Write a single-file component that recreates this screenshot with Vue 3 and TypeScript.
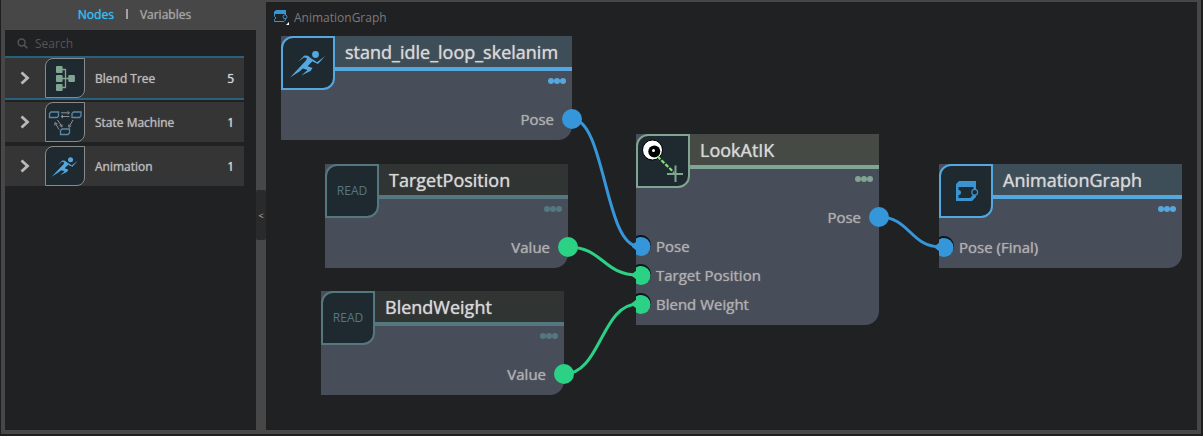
<script setup lang="ts">
import { computed, ref } from 'vue'

type Tone = 'clip' | 'read' | 'ik'
type Glyph = 'runner' | 'read' | 'look' | 'graph' | 'tree' | 'states'

interface Port {
  label: string
  kind: 'pose' | 'value'
}

interface GraphNode {
  id: string
  title: string
  tone: Tone
  glyph: Glyph
  x: number
  y: number
  width: number
  outputs: Port[]
  inputs: Port[]
}

interface Wire {
  from: [string, number]
  to: [string, number]
}

interface Category {
  name: string
  glyph: Glyph
  count: number
}

const tab = ref<'nodes' | 'variables'>('nodes')
const query = ref('')
const selected = ref('Blend Tree')

const categories: Category[] = [
  { name: 'Blend Tree', glyph: 'tree', count: 5 },
  { name: 'State Machine', glyph: 'states', count: 1 },
  { name: 'Animation', glyph: 'runner', count: 1 },
]

const visibleCategories = computed(() =>
  categories.filter((c) => c.name.toLowerCase().includes(query.value.toLowerCase())),
)

const nodes: GraphNode[] = [
  { id: 'clip', title: 'stand_idle_loop_skelanim', tone: 'clip', glyph: 'runner', x: 15, y: 34, width: 291, outputs: [{ label: 'Pose', kind: 'pose' }], inputs: [] },
  { id: 'target', title: 'TargetPosition', tone: 'read', glyph: 'read', x: 59, y: 162, width: 243, outputs: [{ label: 'Value', kind: 'value' }], inputs: [] },
  { id: 'weight', title: 'BlendWeight', tone: 'read', glyph: 'read', x: 55, y: 289, width: 243, outputs: [{ label: 'Value', kind: 'value' }], inputs: [] },
  {
    id: 'ik', title: 'LookAtIK', tone: 'ik', glyph: 'look', x: 370, y: 132, width: 243,
    outputs: [{ label: 'Pose', kind: 'pose' }],
    inputs: [
      { label: 'Pose', kind: 'pose' },
      { label: 'Target Position', kind: 'value' },
      { label: 'Blend Weight', kind: 'value' },
    ],
  },
  { id: 'final', title: 'AnimationGraph', tone: 'clip', glyph: 'graph', x: 673, y: 162, width: 243, outputs: [], inputs: [{ label: 'Pose (Final)', kind: 'pose' }] },
]

const wires: Wire[] = [
  { from: ['clip', 0], to: ['ik', 0] },
  { from: ['target', 0], to: ['ik', 1] },
  { from: ['weight', 0], to: ['ik', 2] },
  { from: ['ik', 0], to: ['final', 0] },
]

const FIRST_ROW = 83
const ROW = 29

const paths = computed(() =>
  wires.map((w) => {
    const a = nodes.find((n) => n.id === w.from[0])!
    const b = nodes.find((n) => n.id === w.to[0])!
    const x1 = a.x + a.width
    const y1 = a.y + FIRST_ROW + w.from[1] * ROW
    const x2 = b.x
    const y2 = b.y + FIRST_ROW + (b.outputs.length + w.to[1]) * ROW
    const mid = (x1 + x2 + 2) / 2
    return {
      d: `M${x1} ${y1} C${mid} ${y1} ${mid} ${y2} ${x2 + 2} ${y2}`,
      flare: `M${x2 - 4} ${y2 - 1} L${x2 + 1} ${y2 - 5} V${y2 + 5} L${x2 - 4} ${y2 + 1}Z`,
      kind: a.outputs[w.from[1]].kind,
    }
  }),
)
</script>

<template>
  <svg class="defs" aria-hidden="true">
    <symbol id="g-runner" viewBox="0 0 54 54">
      <g fill="#55a8df">
        <circle cx="34.5" cy="18.5" r="3.4" />
        <path d="M23.3 19.6L27 19.8L29 21.6L32.6 24L26.6 30.2L31.6 32L29.5 35L20.3 39.6L26.6 34L21.8 32.6L18.5 35.4L9 41.4L17 33L25 24.6L26 22L23 21.4L17.2 25.8Z" />
        <path d="M32 23.4L36 26.2L44.2 20L37 28L31.5 25.6Z" />
      </g>
    </symbol>
    <symbol id="g-look" viewBox="0 0 54 54">
      <circle cx="16.5" cy="16" r="10" fill="#fff" stroke="#000" />
      <circle cx="18.3" cy="17.5" r="6" fill="#000" />
      <circle cx="17.5" cy="16.5" r="1.5" fill="#fff" />
      <path d="M21.5 22.5L38 38.5" stroke="#89dc83" stroke-width="2.2" stroke-dasharray="4 1.5" />
      <path d="M39.5 31.5V48M31 40H47" stroke="#80a592" stroke-width="2" />
    </symbol>
    <symbol id="g-graph" viewBox="0 0 54 54">
      <path fill="#3994d1" fill-rule="evenodd" d="M20 17H37V33L33 37H17V20ZM19.5 23V26A2.5 2.5 0 0 1 19.5 31V34H31L34.5 30.5V23Z" />
      <circle cx="35.7" cy="28.3" r="2.9" fill="#1f2930" stroke="#3994d1" stroke-width="1.2" />
    </symbol>
    <symbol id="g-tree" viewBox="0 0 40 40">
      <path d="M14 11.5H20.5V29.5H14M14 20.5H26" fill="none" stroke="#80a592" stroke-width="1.3" />
      <g fill="#80a592">
        <rect x="11" y="8" width="6.6" height="7" rx="1" />
        <rect x="11" y="17" width="6.6" height="7" rx="1" />
        <rect x="11" y="26" width="6.6" height="7" rx="1" />
        <rect x="23.3" y="17" width="6.6" height="7" rx="1" />
      </g>
    </symbol>
    <symbol id="g-states" viewBox="0 0 40 40">
      <g fill="none" stroke="#5a89a9" stroke-width="1.3">
        <path d="M6 10H13.5V14L12 15.5H4.5V11.5Z" />
        <path d="M28.5 10H36V14L34.5 15.5H27V11.5Z" />
        <path d="M17 27H24.5V31L23 32.5H15.5V28.5Z" />
      </g>
      <g fill="none" stroke="#8b9297" stroke-width="1">
        <path d="M16 10.8H23.5M16.5 14.5H24.5M12.5 18L16.5 24M14 27.5L10.5 21.5M28 18L24.5 24" />
        <path d="M22.5 9.3L24.5 10.8L22.5 12.3M18 13L16 14.5L18 16M14.5 23.5L17 25V22.3M9.8 23.5L10 20.5L12.5 22M23.8 22.5V25.3L26.2 24" />
      </g>
    </symbol>
  </svg>

  <main class="editor">
    <aside class="sidebar">
      <nav class="tabs" aria-label="Panels">
        <button type="button" class="tab" :class="{ active: tab === 'nodes' }" @click="tab = 'nodes'">Nodes</button>
        <span class="divider"></span>
        <button type="button" class="tab" :class="{ active: tab === 'variables' }" @click="tab = 'variables'">Variables</button>
      </nav>
      <div class="palette">
        <label class="search">
          <svg viewBox="0 0 12 12" class="lens" aria-hidden="true">
            <circle cx="5" cy="5" r="3.8" fill="none" stroke="currentColor" stroke-width="1.6" />
            <path d="M7.8 7.8L11.2 11.2" stroke="currentColor" stroke-width="1.8" />
          </svg>
          <input v-model="query" type="text" placeholder="Search" aria-label="Search" />
        </label>
        <ul class="categories">
          <li v-for="c in visibleCategories" :key="c.name">
            <button type="button" class="category" :class="{ selected: selected === c.name }" @click="selected = c.name">
              <svg viewBox="0 0 10 14" class="chevron" aria-hidden="true">
                <path d="M1.5 1.5L7.5 7L1.5 12.5" fill="none" stroke="currentColor" stroke-width="2.8" />
              </svg>
              <span class="badge"><svg><use :href="'#g-' + c.glyph" /></svg></span>
              <span class="name">{{ c.name }}</span>
              <span class="count">{{ c.count }}</span>
            </button>
          </li>
        </ul>
      </div>
    </aside>

    <div class="splitter">
      <button type="button" class="collapse" aria-label="Collapse panel">&lt;</button>
    </div>

    <section class="canvas">
      <header class="crumbs">
        <svg viewBox="0 0 15 15" class="crumb-icon" aria-hidden="true">
          <path fill="#3994d1" d="M2 0H12V4H0V2Z" />
          <path fill="none" stroke="#3994d1" d="M0.5 3.5V6.5L2 8L0.5 9.5V11.5H10L11.5 10V3.5" />
          <circle cx="11" cy="6.8" r="2" fill="#202122" stroke="#3994d1" />
          <path fill="#fff" d="M15 12V15H12Z" />
        </svg>
        <span>AnimationGraph</span>
      </header>

      <svg class="wires" aria-hidden="true">
        <g v-for="(p, i) in paths" :key="i" :class="p.kind">
          <path class="wire" :d="p.d" />
          <path class="flare" :d="p.flare" />
        </g>
      </svg>

      <article
        v-for="n in nodes"
        :key="n.id"
        class="node"
        :class="n.tone"
        :style="{ left: n.x + 'px', top: n.y + 'px', width: n.width + 'px' }"
      >
        <div class="emblem">
          <span v-if="n.glyph === 'read'" class="read-text">READ</span>
          <svg v-else><use :href="'#g-' + n.glyph" /></svg>
        </div>
        <h2 class="title">{{ n.title }}</h2>
        <div class="tools">
          <button type="button" class="more" :aria-label="'Options for ' + n.title"><i></i><i></i><i></i></button>
        </div>
        <div v-for="o in n.outputs" :key="o.label" class="row out" :class="o.kind">
          <span>{{ o.label }}</span>
          <span class="dot"></span>
        </div>
        <div v-for="p in n.inputs" :key="p.label" class="row in" :class="p.kind">
          <svg class="socket" viewBox="0 0 15 21" aria-hidden="true">
            <circle cx="5" cy="10" r="10" fill="#0b131c" />
            <circle cx="5" cy="11.5" r="9.5" fill="currentColor" />
          </svg>
          <span>{{ p.label }}</span>
        </div>
      </article>
    </section>
  </main>
</template>

<style>
body {
  margin: 0;
  background: #1d1d22;
}
</style>

<style scoped>
.defs {
  position: absolute;
  width: 0;
  height: 0;
}

.editor {
  box-sizing: border-box;
  display: grid;
  grid-template-columns: 251px 10px 1fr;
  min-height: 100vh;
  padding: 0 4px 4px;
  border: solid #1d1d22;
  border-width: 0 2px 2px 1px;
  background: #474747;
  font-family: "Open Sans", "Noto Sans", sans-serif;
}

button {
  padding: 0;
  border: 0;
  background: none;
  color: inherit;
  font: inherit;
  cursor: pointer;
}

.tab,
.name,
.count,
.title,
.row {
  text-shadow: 0 0 1px currentColor;
}

.sidebar {
  display: flex;
  flex-direction: column;
}

.tabs {
  box-sizing: border-box;
  display: flex;
  align-items: center;
  justify-content: center;
  gap: 12px;
  height: 30px;
  padding: 0 0 2px 8px;
  color: #a2a2a2;
  font-size: 12px;
}

.tab.active {
  color: #35bdf4;
}

.divider {
  width: 2px;
  height: 10px;
  background: #a2a2a2;
}

.palette {
  flex: 1;
  background: #202122;
}

.search {
  box-sizing: border-box;
  display: flex;
  align-items: center;
  gap: 7px;
  height: 28px;
  padding: 0 0 2px 12px;
  color: #555;
}

.lens {
  width: 11px;
  height: 11px;
}

.search input {
  min-width: 0;
  flex: 1;
  padding: 0;
  border: 0;
  outline: 0;
  background: none;
  color: #aaa;
  font: 12px "Open Sans", "Noto Sans", sans-serif;
}

.search input::placeholder {
  color: #555;
}

.categories {
  display: flex;
  flex-direction: column;
  gap: 4px;
  margin: 0;
  padding: 0 12px 0 0;
  list-style: none;
}

.category {
  display: flex;
  align-items: center;
  width: 100%;
  height: 40px;
  padding: 0 10px 0 15px;
  background: #353535;
  color: #b9b9b9;
  font-size: 12px;
}

.category.selected {
  box-shadow: 0 -2px #28617d, 0 2px #28617d;
}

.chevron {
  width: 10px;
  height: 14px;
}

.badge {
  box-sizing: border-box;
  width: 40px;
  height: 40px;
  margin: 0 10px 0 15px;
  border: 1px solid #8a8a8a;
  border-radius: 8px 0;
  background: #1f2930;
}

.badge svg {
  display: block;
  width: 40px;
  height: 40px;
  margin: -1px;
}

.name {
  flex: 1;
  text-align: left;
}

.count {
  color: #d5d5d5;
}

.splitter {
  display: flex;
  align-items: center;
}

.collapse {
  width: 10px;
  height: 50px;
  border-radius: 2px;
  background: #2a2a2a;
  color: #b9b9b9;
  font-size: 9px;
}

.canvas {
  position: relative;
  margin-top: 2px;
  overflow: hidden;
  background: #202122;
}

.crumbs {
  display: flex;
  align-items: center;
  gap: 5px;
  height: 30px;
  padding-left: 8px;
  color: #7b7b7b;
  font-size: 12px;
}

.crumb-icon {
  width: 15px;
  height: 15px;
}

.wires {
  position: absolute;
  inset: 0;
  width: 100%;
  height: 100%;
}

.pose {
  --port: #3596da;
}

.value {
  --port: #2bd286;
}

.wire {
  fill: none;
  stroke: var(--port);
  stroke-width: 3;
}

.flare {
  fill: var(--port);
}

.node {
  position: absolute;
  box-sizing: border-box;
  padding-bottom: 7px;
  border-radius: 0 0 14px 0;
  background: #484d5a;
}

.clip {
  --accent: #55a8df;
  --head: #3e4e59;
}

.read {
  --accent: #557880;
  --head: #303534;
}

.ik {
  --accent: #80a592;
  --head: #454a45;
}

.emblem {
  position: absolute;
  top: 0;
  left: 0;
  box-sizing: border-box;
  display: grid;
  place-items: center;
  width: 54px;
  height: 54px;
  border: 2px solid var(--accent);
  border-radius: 12px 0;
  background: #1f2930;
}

.emblem svg {
  display: block;
  width: 54px;
  height: 54px;
  margin: -2px;
}

.read-text {
  padding-bottom: 2px;
  color: #557880;
  font-size: 12px;
}

.title {
  box-sizing: border-box;
  height: 35px;
  margin: 0 0 0 12px;
  padding-left: 52px;
  border-bottom: 4px solid var(--accent);
  background: var(--head);
  color: #d6d6d6;
  font-size: 18px;
  font-weight: 400;
  line-height: 32px;
  white-space: nowrap;
}

.tools {
  display: flex;
  align-items: flex-start;
  justify-content: flex-end;
  height: 33px;
  padding-right: 6px;
}

.more {
  display: flex;
  align-items: center;
  height: 20px;
}

.more i {
  width: 6px;
  height: 6px;
  border-radius: 50%;
  background: var(--accent);
}

.row {
  display: flex;
  align-items: center;
  height: 29px;
  color: #aeaeae;
  font-size: 15px;
}

.out {
  justify-content: flex-end;
  gap: 8px;
  margin-right: -10px;
}

.dot {
  width: 20px;
  height: 20px;
  border-radius: 50%;
  background: var(--port);
}

.in {
  gap: 5px;
}

.socket {
  width: 15px;
  height: 21px;
  color: var(--port);
}
</style>
